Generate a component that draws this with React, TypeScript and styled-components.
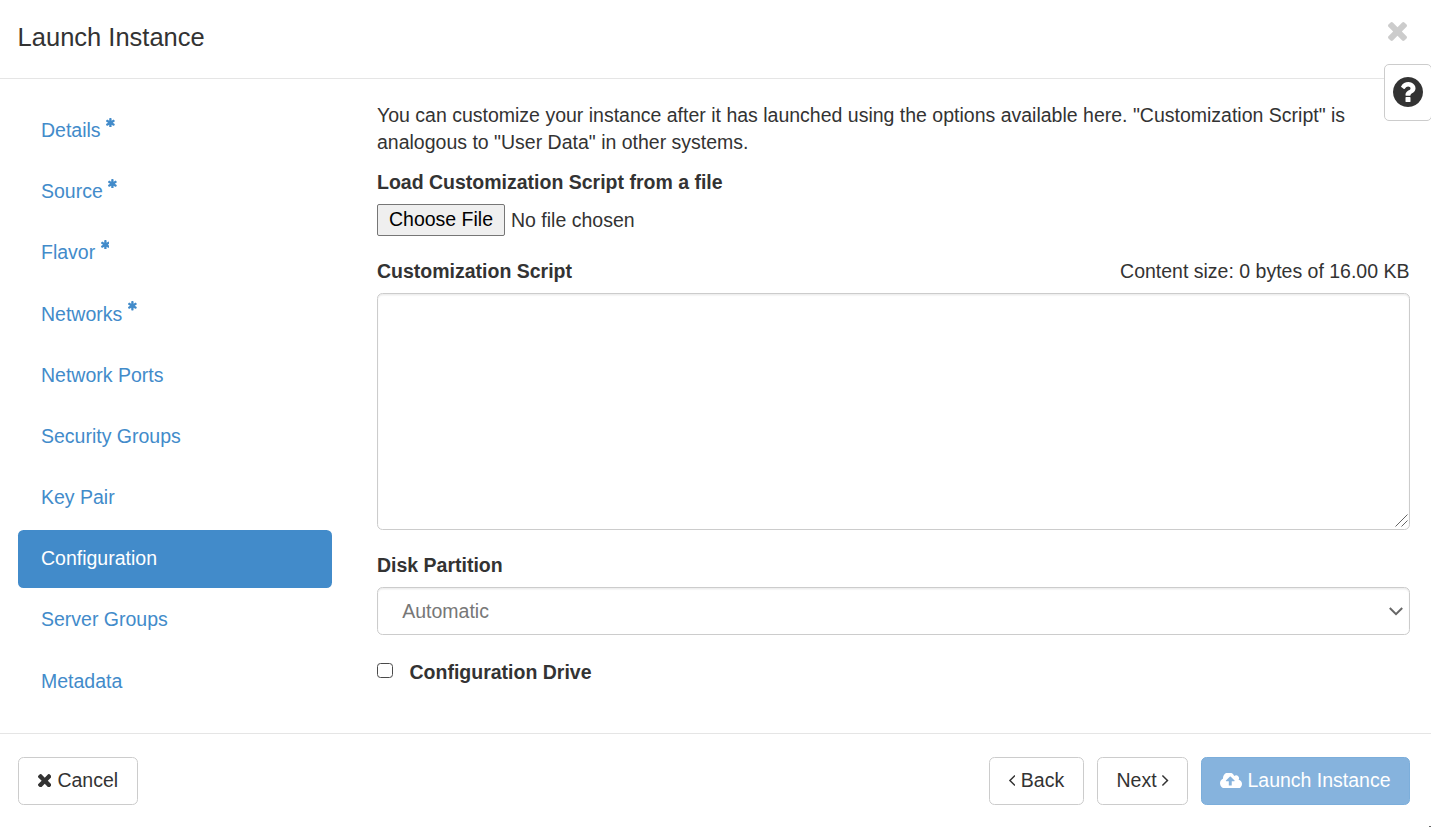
import React from "react";
import styled, { createGlobalStyle, css } from "styled-components";

const GlobalStyle = createGlobalStyle`
  *, *::before, *::after { box-sizing: border-box; }
  html, body { margin: 0; padding: 0; overflow: hidden; background: #fff; }
  body, button, textarea {
    font-family: "Liberation Sans", Arial, sans-serif;
    font-size: 19.5px;
    line-height: 27px;
    color: #333;
  }
`;

const Modal = styled.div`
  position: relative;
  display: flex;
  flex-direction: column;
  width: 1431px;
  height: 827px;
  background: #fff;
  overflow: hidden;
`;

const Header = styled.header`
  display: flex;
  justify-content: space-between;
  align-items: flex-start;
  height: 79px;
  padding: 19px 24px 0 17.6px;
  border-bottom: 1px solid #e5e5e5;
`;

const Title = styled.h4`
  margin: 0;
  font-size: 25.5px;
  font-weight: 400;
  line-height: 36px;
`;

const CloseButton = styled.button`
  display: flex;
  margin: 3px 0 0;
  padding: 0;
  border: 0;
  background: none;
  color: #ccc;
`;

const HelpButton = styled.button`
  position: absolute;
  top: 64px;
  right: -1px;
  display: flex;
  align-items: center;
  width: 48px;
  height: 57px;
  padding: 0 0 2px 8px;
  border: 1px solid #ccc;
  border-radius: 5px;
  background: #fff;
  color: #333;
`;

const Body = styled.main`
  display: flex;
  flex: 1;
  padding: 22.6px 21px 0 18px;
`;

const Nav = styled.nav`
  display: flex;
  flex-direction: column;
  gap: 3.4px;
  width: 314px;
  margin-right: 45px;
`;

const NavItem = styled.a<{ $active?: boolean }>`
  display: flex;
  align-items: center;
  height: 57.8px;
  padding: 0 23px;
  border-radius: 5.5px;
  color: ${(p) => (p.$active ? "#fff" : "#428bca")};
  ${(p) => p.$active && css`background: #428bca;`}
`;

const Required = styled.span`
  display: flex;
  margin: 0 0 16.4px 5.5px;
`;

const Content = styled.section`
  display: flex;
  flex-direction: column;
  width: 1033px;
`;

const Intro = styled.p`
  margin: 0 0 13px;
`;

const Label = styled.label`
  font-weight: 700;
`;

const FileRow = styled.div`
  display: flex;
  align-items: center;
  gap: 6px;
  height: 32px;
  margin: 8px 0 22px;
`;

const FileButton = styled.button`
  width: 128px;
  height: 32px;
  padding: 0;
  border: 1px solid #767676;
  border-radius: 2px;
  background: #efefef;
  color: #000;
`;

const FileName = styled.span`
  padding-top: 1px;
`;

const ScriptHead = styled.div`
  display: flex;
  justify-content: space-between;
`;

const ContentSize = styled.span`
  margin-right: 0.5px;
`;

const TextAreaWrap = styled.div`
  position: relative;
  height: 237px;
  margin: 8px 0 22px;
`;

const fieldStyle = css`
  border: 1px solid #ccc;
  border-radius: 5.5px;
  background: #fff;
  box-shadow: inset 0 1.4px 1.4px rgba(0, 0, 0, 0.075);
`;

const TextArea = styled.textarea`
  ${fieldStyle}
  display: block;
  width: 100%;
  height: 100%;
  padding: 8px 16px;
  resize: none;
`;

const Grip = styled.svg`
  position: absolute;
  right: 2px;
  bottom: 3px;
`;

const Select = styled.button`
  ${fieldStyle}
  display: flex;
  justify-content: space-between;
  align-items: center;
  height: 48px;
  margin: 8px 0 23px;
  padding: 1px 6px 0 24.2px;
  color: #777;
`;

const CheckRow = styled.div`
  display: flex;
  align-items: center;
  gap: 17px;
  padding-top: 1px;
`;

const Checkbox = styled.span`
  width: 15.5px;
  height: 15.5px;
  margin-top: -3px;
  border: 1.4px solid #4a4a4a;
  border-radius: 3.5px;
  background: #fff;
`;

const Footer = styled.footer`
  display: flex;
  justify-content: space-between;
  height: 94px;
  padding: 23px 21px 0 18px;
  border-top: 1px solid #e5e5e5;
`;

const Actions = styled.div`
  display: flex;
  gap: 13px;
`;

const Button = styled.button<{ $width: number; $gap?: number; $primary?: boolean }>`
  display: flex;
  justify-content: center;
  align-items: center;
  gap: ${(p) => p.$gap ?? 5}px;
  width: ${(p) => p.$width}px;
  height: 48px;
  padding: 0 0 1px;
  border: 1px solid ${(p) => (p.$primary ? "#7caedb" : "#ccc")};
  border-radius: 5.5px;
  background: ${(p) => (p.$primary ? "#86b3dd" : "#fff")};
  color: ${(p) => (p.$primary ? "#fff" : "#333")};
  white-space: nowrap;
`;

const CornerMark = styled.span`
  position: absolute;
  right: 0;
  bottom: 0;
  width: 2px;
  height: 1px;
  background: #666;
`;

const glyphs = {
  times: {
    box: "302 366 1188 1188",
    d: "M1490 1322q0 40-28 68l-136 136q-28 28-68 28t-68-28l-294-294-294 294q-28 28-68 28t-68-28l-136-136q-28-28-28-68t28-68l294-294-294-294q-28-28-28-68t28-68l136-136q28-28 68-28t68 28l294 294 294-294q28-28 68-28t68 28l136 136q28 28 28 68t-28 68l-294 294 294 294q28 28 28 68z",
  },
  question: {
    box: "128 128 1536 1536",
    d: "M1024 1376v-192q0-14-9-23t-23-9h-192q-14 0-23 9t-9 23v192q0 14 9 23t23 9h192q14 0 23-9t9-23zm256-672q0-88-55.5-163t-138.5-116-170-41q-243 0-371 213-15 24 8 42l132 100q7 6 19 6 16 0 25-12 53-68 86-92 34-24 86-24 48 0 85.5 26t37.5 59q0 38-20 61t-68 45q-63 28-115.5 86.5t-52.5 125.5v36q0 14 9 23t23 9h192q14 0 23-9t9-23q0-19 21.5-49.5t54.5-49.5q32-18 49-28.5t46-35 44.5-48 28-60.5 12.5-81zm384 192q0 209-103 385.5t-279.5 279.5-385.5 103-385.5-103-279.5-279.5-103-385.5 103-385.5 279.5-279.5 385.5-103 385.5 103 279.5 279.5 103 385.5z",
  },
  cloud: {
    box: "0 256 1920 1344",
    d: "M1280 928q0-14-9-23l-352-352q-9-9-23-9t-23 9l-351 351q-10 12-10 24 0 14 9 23t23 9h224v352q0 13 9.5 22.5t22.5 9.5h192q13 0 22.5-9.5t9.5-22.5v-352h224q13 0 22.5-9.5t9.5-22.5zm640 288q0 159-112.5 271.5t-271.5 112.5h-1088q-185 0-316.5-131.5t-131.5-316.5q0-130 70-240t188-165q-2-30-2-43 0-212 150-362t362-150q156 0 285.5 87t188.5 231q71-62 166-62 106 0 181 75t75 181q0 76-41 138 130 31 213.5 135.5t83.5 238.5z",
  },
  asterisk: {
    box: "183 128 1426 1536",
    d: "M1546 1050q46 26 59.5 77.5t-12.5 97.5l-64 110q-26 46-77.5 59.5t-97.5-12.5l-266-153v307q0 52-38 90t-90 38h-128q-52 0-90-38t-38-90v-307l-266 153q-46 26-97.5 12.5t-77.5-59.5l-64-110q-26-46-12.5-97.5t59.5-77.5l266-154-266-154q-46-26-59.5-77.5t12.5-97.5l64-110q26-46 77.5-59.5t97.5 12.5l266 153v-307q0-52 38-90t90-38h128q52 0 90 38t38 90v307l266-153q46-26 97.5-12.5t77.5 59.5l64 110q26 46 12.5 97.5t-59.5 77.5l-266 154z",
  },
  left: {
    box: "621 461 582 998",
    d: "M1203 544q0 13-10 23l-393 393 393 393q10 10 10 23t-10 23l-50 50q-10 10-23 10t-23-10l-466-466q-10-10-10-23t10-23l466-466q10-10 23-10t23 10l50 50q10 10 10 23z",
  },
  right: {
    box: "589 461 582 998",
    d: "M1171 960q0 13-10 23l-466 466q-10 10-23 10t-23-10l-50-50q-10-10-10-23t10-23l393-393-393-393q-10-10-10-23t10-23l50-50q10-10 23-10t23 10l466 466q10 10 10 23z",
  },
};

function Icon({ name, w, h }: { name: keyof typeof glyphs; w: number; h: number }) {
  return (
    <svg width={w} height={h} viewBox={glyphs[name].box} fill="currentColor" aria-hidden="true">
      <path d={glyphs[name].d} />
    </svg>
  );
}

const steps = [
  { label: "Details", required: true },
  { label: "Source", required: true },
  { label: "Flavor", required: true },
  { label: "Networks", required: true },
  { label: "Network Ports" },
  { label: "Security Groups" },
  { label: "Key Pair" },
  { label: "Configuration", active: true },
  { label: "Server Groups" },
  { label: "Metadata" },
];

export default function App() {
  return (
    <Modal>
      <GlobalStyle />
      <Header>
        <Title>Launch Instance</Title>
        <CloseButton aria-label="Close">
          <Icon name="times" w={19} h={19} />
        </CloseButton>
      </Header>
      <Body>
        <Nav>
          {steps.map((s) => (
            <NavItem key={s.label} $active={s.active}>
              {s.label}
              {s.required && (
                <Required>
                  <Icon name="asterisk" w={8.8} h={9.4} />
                </Required>
              )}
            </NavItem>
          ))}
        </Nav>
        <Content>
          <Intro>
            You can customize your instance after it has launched using the options available here.
            "Customization Script" is analogous to "User Data" in other systems.
          </Intro>
          <Label>Load Customization Script from a file</Label>
          <FileRow>
            <FileButton>Choose File</FileButton>
            <FileName>No file chosen</FileName>
          </FileRow>
          <ScriptHead>
            <Label>Customization Script</Label>
            <ContentSize>Content size: 0 bytes of 16.00 KB</ContentSize>
          </ScriptHead>
          <TextAreaWrap>
            <TextArea />
            <Grip width="13" height="13" viewBox="0 0 13 13" stroke="#555" strokeWidth="0.9">
              <path d="M0.5 12.5L12.5 0.5M6.5 12.5L12.5 6.5" />
            </Grip>
          </TextAreaWrap>
          <Label>Disk Partition</Label>
          <Select>
            Automatic
            <svg width="14" height="9" viewBox="0 0 14 9" fill="none" stroke="#666" strokeWidth="2">
              <path d="M0.8 1L7 7.2L13.2 1" />
            </svg>
          </Select>
          <CheckRow>
            <Checkbox role="checkbox" aria-checked="false" />
            <Label>Configuration Drive</Label>
          </CheckRow>
        </Content>
      </Body>
      <Footer>
        <Button $width={120} $gap={6}>
          <Icon name="times" w={13.5} h={13.5} />
          Cancel
        </Button>
        <Actions>
          <Button $width={95} $gap={5.6}>
            <Icon name="left" w={6.4} h={11} />
            Back
          </Button>
          <Button $width={91} $gap={5.6}>
            Next
            <Icon name="right" w={6.4} h={11} />
          </Button>
          <Button $width={209} $gap={5} $primary>
            <Icon name="cloud" w={22} h={15.6} />
            Launch Instance
          </Button>
        </Actions>
      </Footer>
      <HelpButton aria-label="Help">
        <Icon name="question" w={30} h={30} />
      </HelpButton>
      <CornerMark />
    </Modal>
  );
}
